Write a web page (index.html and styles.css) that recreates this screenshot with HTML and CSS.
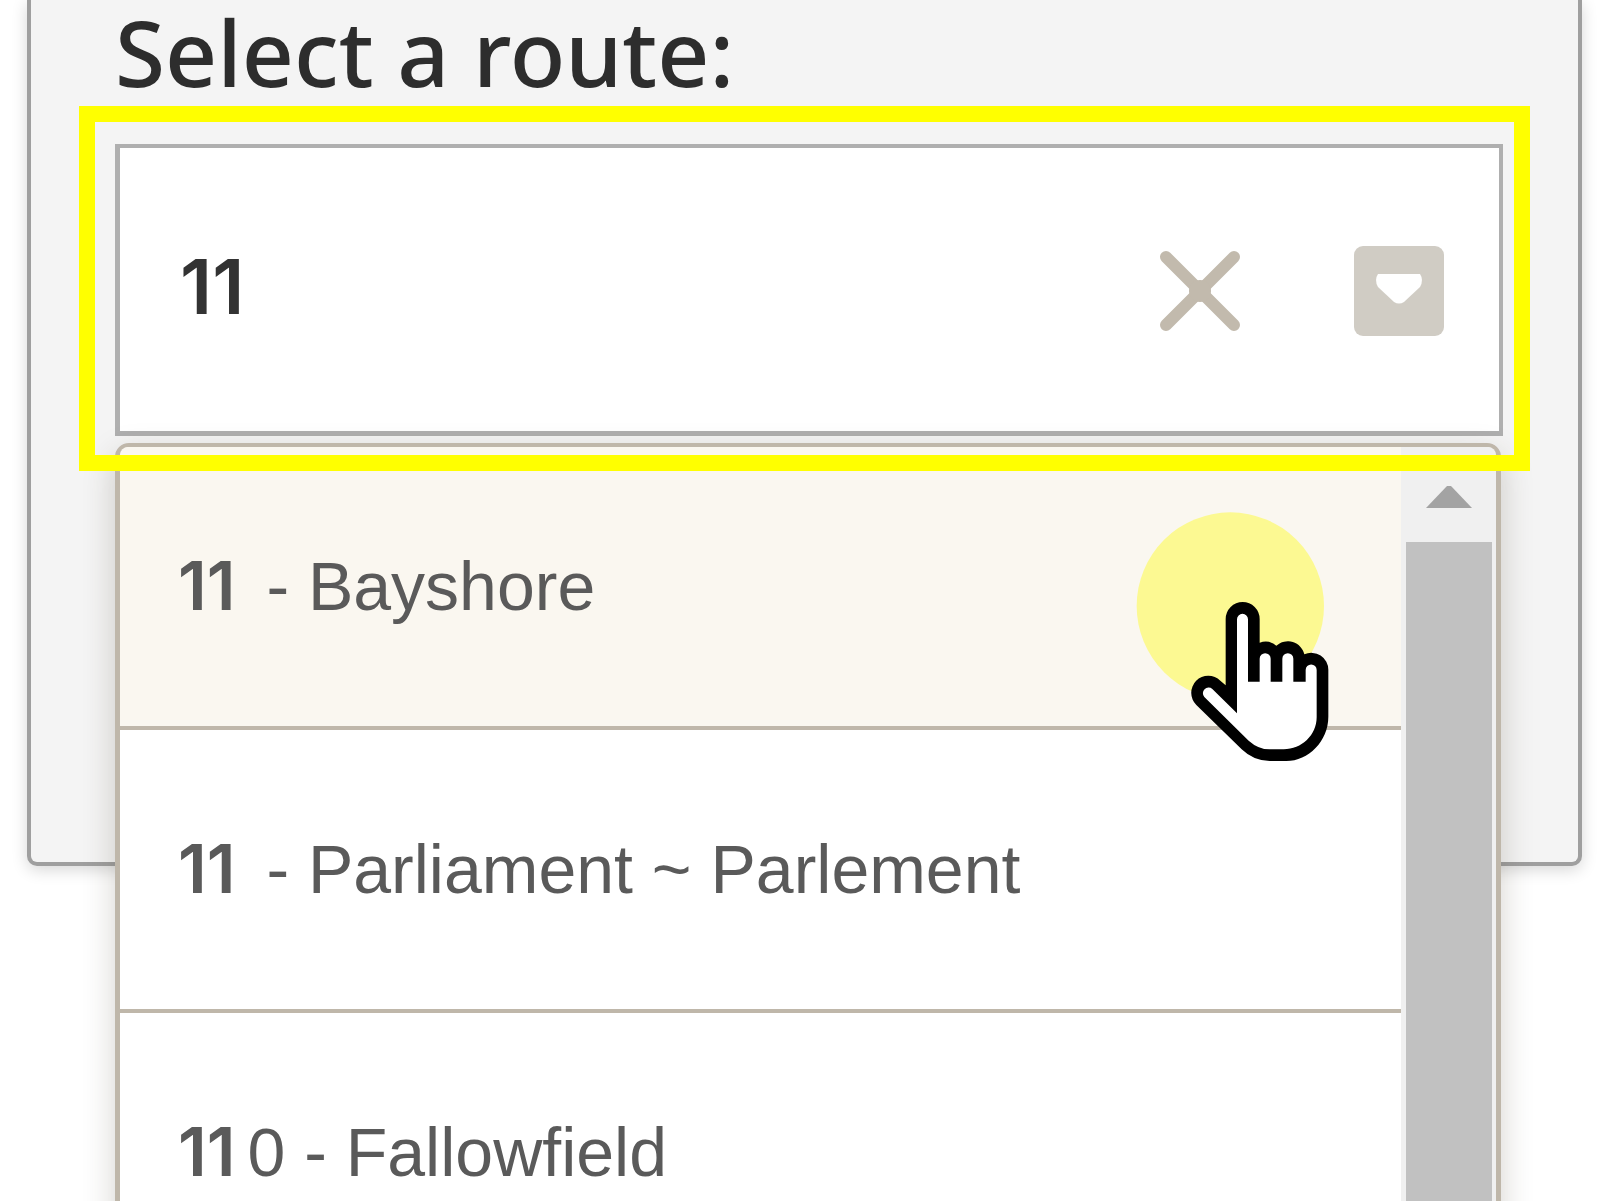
FILE: index.html
```html
<!DOCTYPE html>
<html lang="en">
<head>
<meta charset="utf-8">
<title>Select a route</title>
<link rel="stylesheet" href="styles.css">
</head>
<body>
<main class="panel">
  <label class="label" for="route">Select a route:</label>
  <div class="combo">
    <div class="field">
      <input class="field-input" id="route" type="text" value="11" autocomplete="off">
      <button class="icon-button" type="button" aria-label="Clear">
        <svg class="icon-clear" viewBox="0 0 82 82" aria-hidden="true"><path d="M7 7L75 75M75 7L7 75"/><circle class="icon-core" cx="41" cy="41" r="11"/></svg>
      </button>
      <button class="icon-button" type="button" aria-label="Show routes">
        <svg class="icon-toggle" viewBox="0 0 90 90" aria-hidden="true"><rect width="90" height="90" rx="9"/><path d="M24 28H66Q70 34 66 41L50 56Q45 59 40 56L24 41Q20 34 24 28Z"/></svg>
      </button>
    </div>
    <div class="menu">
      <ul class="routes">
        <li class="route route-active"><span><b>11</b> - Bayshore</span></li>
        <li class="route"><span><b>11</b> - Parliament ~ Parlement</span></li>
        <li class="route"><span><b>11</b>0 - Fallowfield</span></li>
      </ul>
      <div class="scrollbar">
        <svg class="scroll-arrow" viewBox="0 0 46 22" aria-hidden="true"><path d="M0 22L21 0H25L46 22Z"/></svg>
        <div class="scroll-thumb"></div>
      </div>
      <svg class="pointer" viewBox="100 90 600 765" aria-hidden="true">
        <circle cx="392" cy="378" r="281" fill="#fcf992"/>
        <path d="M378 616V417A51 51 0 0 1 480 417V488A51 51 0 0 1 530 497A51 51 0 0 1 614 523A51 51 0 0 1 686 570V710C686 783 626 843 560 843H510Q462 843 426 808L290 675A51 51 0 0 1 362 602Z"/>
        <path fill="#fff" d="M412 700V418A16 16 0 0 1 445 418V605H480V536A16 16 0 0 1 513 536V605H548V536A16 16 0 0 1 581 536V605H618V570A16 16 0 0 1 651 570V712C651 765 606 808 552 808H510Q476 808 447 782L314 651A17 17 0 0 1 338 627Z"/>
      </svg>
    </div>
    <div class="highlight"></div>
  </div>
</main>
</body>
</html>
```

FILE: styles.css
```css
* {
  box-sizing: border-box;
}

body {
  margin: 0;
  min-height: 100vh;
  overflow: hidden;
  background: #fff;
  font-family: "Liberation Sans", Arial, sans-serif;
}

.panel {
  margin: 0 19px 0 27px;
  padding: 0 75px 426px 84px;
  border: 4px solid #9f9f9f;
  border-top: 0;
  border-radius: 0 0 10px 10px;
  background: #f4f4f4;
  box-shadow: 0 4px 16px rgba(0, 0, 0, 0.16);
}

.label {
  display: block;
  padding-bottom: 40px;
  color: #2d2d2d;
  font-family: "Noto Sans", "Open Sans", sans-serif;
  font-size: 91px;
  font-weight: 500;
  line-height: 104px;
}

.combo {
  position: relative;
}

.field {
  display: flex;
  align-items: center;
  gap: 113px;
  height: 292px;
  padding: 0 55px 0 60px;
  border: 4px solid #afafaf;
  border-left-width: 5px;
  border-bottom-width: 5px;
  background: #fff;
}

.field-input {
  flex: 1;
  min-width: 0;
  padding: 0 0 8px;
  border: 0;
  outline: 0;
  background: transparent;
  color: #333;
  font: 600 76px/88px Inter, "Liberation Sans", Arial, sans-serif;
}

.icon-button {
  display: flex;
  padding: 2px 0 0;
  border: 0;
  background: none;
}

.icon-clear {
  width: 82px;
  height: 82px;
  fill: none;
  stroke: #c2baad;
  stroke-width: 12px;
  stroke-linecap: round;
}

.icon-clear .icon-core {
  fill: #c2baad;
  stroke: none;
}

.icon-toggle {
  width: 90px;
  height: 90px;
  fill: #d0ccc4;
}

.icon-toggle path {
  fill: #fff;
}

.menu {
  position: absolute;
  top: 299px;
  right: 2px;
  left: 0;
  display: flex;
  border: 5px solid #bfb7aa;
  border-top-width: 4px;
  border-radius: 14px;
  background: #fff;
  box-shadow: 0 12px 32px rgba(60, 50, 30, 0.22);
}

.routes {
  flex: 1;
  margin: 0;
  padding: 0;
  list-style: none;
}

.route {
  display: flex;
  align-items: center;
  height: 283px;
  padding: 0 0 2px 58px;
  border-bottom: 4px solid #bfb7aa;
  color: #5a5a5a;
  font-size: 68px;
}

.route b {
  margin-right: 12px;
  font-family: Inter, "Liberation Sans", Arial, sans-serif;
  font-weight: 600;
  line-height: 1;
}

.route-active {
  border-top-left-radius: 8px;
  background: #faf7f0;
}

.scrollbar {
  display: flex;
  flex-direction: column;
  align-items: center;
  width: 95px;
  padding-top: 39px;
  border-top-right-radius: 8px;
  background: #f0f0f0;
}

.scroll-arrow {
  width: 46px;
  height: 22px;
  fill: #a3a3a3;
}

.scroll-thumb {
  flex: 1;
  width: 86px;
  margin-top: 34px;
  background: #c1c1c1;
}

.pointer {
  position: absolute;
  top: 63px;
  right: 163px;
  width: 200px;
  height: 255px;
}

.highlight {
  position: absolute;
  inset: -38px -27px -35px -36px;
  border: 16px solid #ff0;
  pointer-events: none;
}
```
